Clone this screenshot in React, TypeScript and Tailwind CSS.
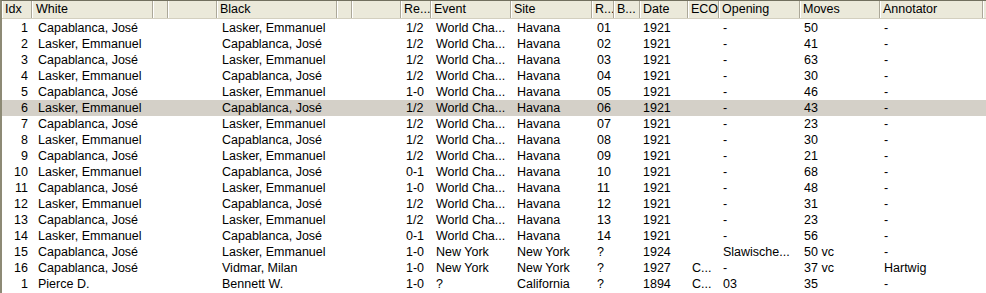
import React from "react";

type Col = { w: string; head: string; cell: string; headPad?: string };

const cols: Col[] = [
  { w: "w-[30px]", head: "Idx", cell: "text-right pr-[4px]" },
  { w: "w-[121px]", head: "White", cell: "pl-[6px]", headPad: "pl-[4px]" },
  { w: "w-[15px]", head: "", cell: "" },
  { w: "w-[49px]", head: "", cell: "" },
  { w: "w-[120px]", head: "Black", cell: "pl-[5px]" },
  { w: "w-[15px]", head: "", cell: "" },
  { w: "w-[49px]", head: "", cell: "" },
  { w: "w-[30px]", head: "Re...", cell: "pl-[5px]" },
  { w: "w-[80px]", head: "Event", cell: "pl-[5px]" },
  { w: "w-[81px]", head: "Site", cell: "pl-[6px]" },
  { w: "w-[22px]", head: "R...", cell: "pl-[5px]" },
  { w: "w-[26px]", head: "B...", cell: "pl-[5px]" },
  { w: "w-[48px]", head: "Date", cell: "pl-[3px]" },
  { w: "w-[31px]", head: "ECO", cell: "pl-[4px]" },
  { w: "w-[81px]", head: "Opening", cell: "pl-[4px]" },
  { w: "w-[80px]", head: "Moves", cell: "pl-[4px]" },
  { w: "w-[103px]", head: "Annotator", cell: "pl-[4px]" },
];

const CAP = "Capablanca, José";
const LAS = "Lasker, Emmanuel";

const wc: [string, string, string, string][] = [
  ["1/2", "01", "50", "c"],
  ["1/2", "02", "41", "l"],
  ["1/2", "03", "63", "c"],
  ["1/2", "04", "30", "l"],
  ["1-0", "05", "46", "c"],
  ["1/2", "06", "43", "l"],
  ["1/2", "07", "23", "c"],
  ["1/2", "08", "30", "l"],
  ["1/2", "09", "21", "c"],
  ["0-1", "10", "68", "l"],
  ["1-0", "11", "48", "c"],
  ["1/2", "12", "31", "l"],
  ["1/2", "13", "23", "c"],
  ["0-1", "14", "56", "l"],
];

const rows: string[][] = [
  ...wc.map(([res, rnd, moves, who], i) => [
    String(i + 1),
    who === "c" ? CAP : LAS,
    "",
    "",
    who === "c" ? LAS : CAP,
    "",
    "",
    res,
    "World Cha...",
    "Havana",
    rnd,
    "",
    "1921",
    "",
    "-",
    moves,
    "-",
  ]),
  ["15", CAP, "", "", LAS, "", "", "1-0", "New York", "New York", "?", "", "1924", "", "Slawische...", "50 vc", "-"],
  ["16", CAP, "", "", "Vidmar, Milan", "", "", "1-0", "New York", "New York", "?", "", "1927", "C...", "-", "37 vc", "Hartwig"],
  ["1", "Pierce D.", "", "", "Bennett W.", "", "", "1-0", "?", "California", "?", "", "1894", "C...", "03", "35", "-"],
];

export default function App() {
  return (
    <div
      className="w-[986px] h-[293px] overflow-hidden bg-white border-t border-t-[#716f5e] border-l-2 border-l-[#8d8a75] text-black text-[12.5px]"
      style={{ fontFamily: '"Liberation Sans", Arial, sans-serif' }}
    >
      <div className="flex h-[18px] bg-[#ebe9da] border-b border-b-[#d3cfbf] leading-[17px]">
        {cols.map((c, i) => (
          <div
            key={i}
            className={`${c.w} shrink-0 whitespace-nowrap overflow-hidden border-r border-r-[#aca899] shadow-[inset_1px_0_0_#ffffff] ${c.headPad ?? "pl-[3px]"}`}
          >
            {c.head}
          </div>
        ))}
        <div className="flex-1 shadow-[inset_1px_0_0_#ffffff]" />
      </div>
      <div className="pt-px">
        {rows.map((r, ri) => (
          <div key={ri} className={`flex h-4 leading-4 ${ri === 5 ? "bg-[#d4d0c8]" : ""}`}>
            {r.map((v, ci) => (
              <div key={ci} className={`${cols[ci].w} shrink-0 whitespace-nowrap overflow-hidden ${cols[ci].cell}`}>
                {v}
              </div>
            ))}
          </div>
        ))}
      </div>
    </div>
  );
}
